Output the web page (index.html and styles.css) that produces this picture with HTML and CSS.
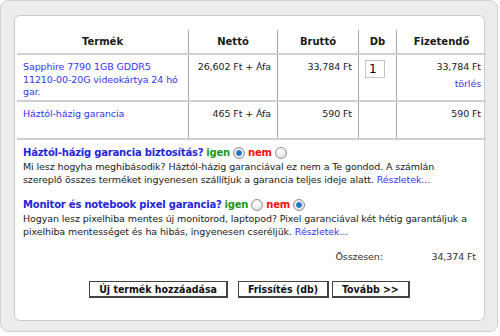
FILE: index.html
```html
<!DOCTYPE html>
<html lang="hu">
<head>
<meta charset="UTF-8">
<title>Kosár</title>
<link rel="stylesheet" href="styles.css">
</head>
<body>
<div class="outer">
  <div class="panel">
    <table class="cart">
      <tr class="row-head">
        <th class="c-name">Termék</th>
        <th class="c-net">Nettó</th>
        <th class="c-gross">Bruttó</th>
        <th class="c-qty">Db</th>
        <th class="c-total">Fizetendő</th>
      </tr>
      <tr class="row-main">
        <td class="c-name"><a href="#">Sapphire 7790 1GB GDDR5 <span class="nw">11210-00-20G</span> videokártya 24 hó gar.</a></td>
        <td class="c-net">26,602 Ft + Áfa</td>
        <td class="c-gross">33,784 Ft</td>
        <td class="c-qty"><input class="qty" type="text" value="1"></td>
        <td class="c-total">33,784 Ft<br><a class="del" href="#">törlés</a></td>
      </tr>
      <tr class="row-extra">
        <td class="c-name"><a href="#">Háztól-házig garancia</a></td>
        <td class="c-net">465 Ft + Áfa</td>
        <td class="c-gross">590 Ft</td>
        <td class="c-qty"></td>
        <td class="c-total">590 Ft</td>
      </tr>
    </table>

    <div class="option">
      <div class="opt-title">Háztól-házig garancia biztosítás? <span class="yes">igen</span> <input type="radio" name="h2h" checked> <span class="no">nem</span> <input type="radio" name="h2h"></div>
      <p>Mi lesz hogyha meghibásodik? Háztól-házig garanciával ez nem a Te gondod. A számlán szereplő összes terméket ingyenesen szállítjuk a garancia teljes ideje alatt. <a href="#">Részletek...</a></p>
    </div>

    <div class="option">
      <div class="opt-title">Monitor és notebook pixel garancia? <span class="yes">igen</span> <input type="radio" name="pix"> <span class="no">nem</span> <input type="radio" name="pix" checked></div>
      <p>Hogyan lesz pixelhiba mentes új monitorod, laptopod? Pixel garanciával két hétig garantáljuk a pixelhiba mentességet és ha hibás, ingyenesen cseréljük. <a href="#">Részletek...</a></p>
    </div>

    <div class="sum">
      <span class="sum-label">Összesen:</span>
      <span class="sum-value">34,374 Ft</span>
    </div>

    <div class="buttons">
      <button class="btn-add">Új termék hozzáadása</button>
      <button class="btn-refresh">Frissítés (db)</button>
      <button>Tovább &gt;&gt;</button>
    </div>
  </div>
</div>
</body>
</html>
```

FILE: styles.css
```css
body {
    margin: 0;
    background: #fff;
    font-family: "DejaVu Sans", Verdana, sans-serif;
    font-size: 9.5px;
    letter-spacing: -0.1px;
    color: #1a1a1a;
}
.outer {
    box-sizing: border-box;
    width: 498px;
    height: 332px;
    background: #ececec;
    border: 1px solid #d2d2d2;
    border-radius: 8px;
    padding: 14px 12px 0 13px;
}
.panel {
    box-sizing: border-box;
    height: 306px;
    background: #fff;
    border: 1px solid #c9c9c9;
    border-radius: 6px;
    padding: 14px 2px 0 2px;
}
a { color: #3535f0; text-decoration: none; }
.nw { white-space: nowrap; }

.cart {
    width: 465px;
    border-collapse: collapse;
    table-layout: fixed;
}
.cart th {
    font-size: 10px;
    letter-spacing: 0;
    font-weight: bold;
    text-align: center;
    padding: 0;
    border-left: 1px solid #a3a8b4;
    border-bottom: 2px solid #cdd0d5;
}
.cart td {
    vertical-align: top;
    padding: 6px 6px 0 6px;
    line-height: 12.5px;
    border-left: 1px solid #a3a8b4;
    border-bottom: 2px solid #cdd0d5;
}
.cart th:first-child, .cart td:first-child { border-left: none; }
.row-head { height: 24px; }
.row-main { height: 47px; }
.row-extra { height: 38px; }
.c-name { width: 171px; }
.c-net { width: 88px; }
.c-gross { width: 80px; }
.c-qty { width: 37px; }
.c-total { width: 89px; }
.cart td.c-net, .cart td.c-gross, .cart td.c-total { text-align: right; }
.cart td.c-total { padding-right: 5px; }
.cart td.c-qty { padding: 5px 0 0 6px; }
.qty {
    box-sizing: border-box;
    width: 20px;
    height: 18px;
    border: 1px solid #c4c4c4;
    padding: 0 3px;
    font-family: "DejaVu Sans", sans-serif;
    font-size: 12px;
    margin: 0;
}
.del { display: inline-block; margin-top: 4px; }

.option { padding: 0 6px; margin-top: 6px; }
.option + .option { margin-top: 12px; }
.opt-title {
    font-weight: bold;
    font-size: 10px;
    letter-spacing: -0.2px;
    color: #2424d8;
    line-height: 14px;
    display: flex;
    align-items: center;
    gap: 3px;
}
.yes { color: #1a9a1a; }
.no { color: #f01010; }
.opt-title input {
    appearance: none;
    width: 12px;
    height: 12px;
    margin: 0;
    border-radius: 50%;
    border: 1px solid #909090;
    background: radial-gradient(circle at 40% 35%, #fff, #d8d8d8);
    box-sizing: border-box;
}
.opt-title input:checked {
    background: radial-gradient(circle, #0a5aa8 0, #3a8ad0 2.5px, #eee 3.5px, #d0d0d0 100%);
}
.option p {
    margin: 0;
    line-height: 13px;
}

.sum {
    display: flex;
    justify-content: flex-end;
    margin-top: 12px;
    padding-right: 6px;
    line-height: 13px;
    color: #333;
}
.sum-label { width: 96px; }

.buttons {
    display: flex;
    justify-content: center;
    margin-top: 18px;
}
.buttons button {
    box-sizing: border-box;
    font-family: "DejaVu Sans Condensed", "DejaVu Sans", sans-serif;
    font-size: 10.5px;
    font-weight: bold;
    background: #fff;
    color: #111;
    border: 1px solid #444;
    border-right-width: 2px;
    border-bottom-width: 2px;
    padding: 0 9px;
    height: 17px;
    line-height: 14px;
}
.btn-add { margin-right: 10px; }
.btn-refresh { margin-right: 3px; }
```
